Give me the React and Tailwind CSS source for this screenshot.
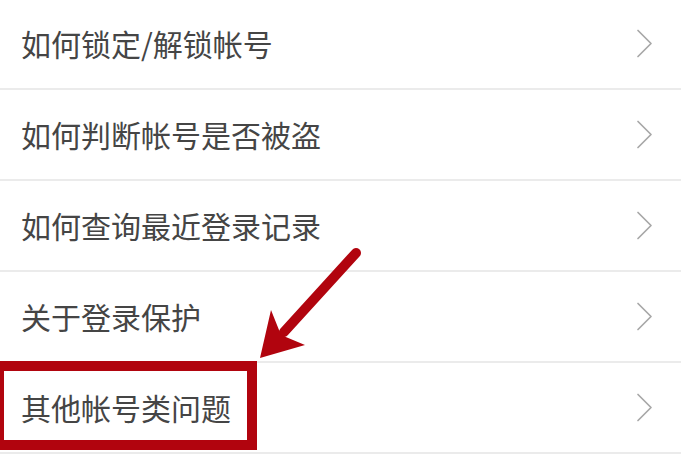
import React from "react";

const items = [
  "如何锁定/解锁帐号",
  "如何判断帐号是否被盗",
  "如何查询最近登录记录",
  "关于登录保护",
  "其他帐号类问题",
];

function Chevron() {
  return (
    <svg width="17" height="29" viewBox="0 0 17 29" className="shrink-0">
      <path d="M2 1.5 L15 14.5 L2 27.5" fill="none" stroke="#a8a8a8" strokeWidth="1.7" strokeLinecap="round" strokeLinejoin="round" />
    </svg>
  );
}

export default function App() {
  return (
    <div className="relative w-[681px] h-[457px] overflow-hidden bg-white" style={{ fontFamily: '"Noto Sans CJK SC", "Noto Sans", sans-serif' }}>
      <div className="flex flex-col mt-[-1px]">
        {items.map((t, i) => (
          <div key={i} className="flex items-center justify-between h-[91px] border-b-2 border-[#ebebeb] pl-[21px] pr-[28px]">
            <span className="text-[30px] leading-none text-[#454545] font-normal -mt-[2px]">{t}</span>
            <Chevron />
          </div>
        ))}
      </div>
      <div className="absolute left-[-6px] top-[361px] w-[263px] h-[89px] border-[10px] border-[#b1040e] pointer-events-none" />
      <svg className="absolute inset-0 pointer-events-none" width="681" height="457" viewBox="0 0 681 457">
        <line x1="356" y1="253" x2="284" y2="332" stroke="#b1040e" strokeWidth="10" strokeLinecap="round" />
        <polygon points="260,358 271,310 281,335 305,345" fill="#b1040e" />
      </svg>
    </div>
  );
}
